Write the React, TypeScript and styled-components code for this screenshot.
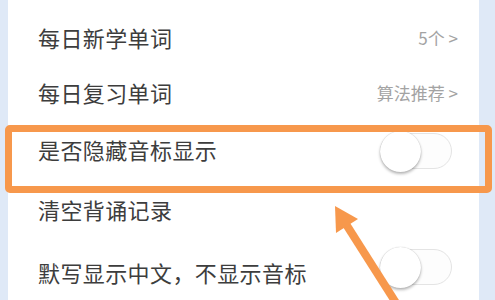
import styled, { createGlobalStyle } from 'styled-components';

const GlobalStyle = createGlobalStyle`
  html, body {
    margin: 0;
    padding: 0;
    width: 495px;
    height: 300px;
    overflow: hidden;
    background: #dfe9f7;
  }
`;

const Page = styled.div`
  position: relative;
  width: 495px;
  height: 300px;
  padding: 0 16px 0 8px;
  box-sizing: border-box;
  background: #dfe9f7;
  font-family: 'Noto Sans CJK SC', 'Noto Sans', sans-serif;
`;

const Card = styled.div`
  display: flex;
  flex-direction: column;
  height: 100%;
  padding: 11px 21px 0 30px;
  background: #ffffff;
`;

const Row = styled.div<{ $h: number }>`
  display: flex;
  align-items: center;
  justify-content: space-between;
  height: ${p => p.$h}px;
  flex-shrink: 0;
`;

const Label = styled.span`
  font-size: 22px;
  color: #3d3d3d;
  letter-spacing: 0.4px;
`;

const Value = styled.span`
  font-size: 17px;
  color: #a3a3a3;
`;

const Track = styled.div<{ $dy: number }>`
  position: relative;
  width: 72px;
  height: 36px;
  margin-right: 6px;
  margin-top: ${p => p.$dy}px;
  box-sizing: border-box;
  border: 1px solid #e4e4e4;
  border-radius: 18px;
  background: #fdfdfd;
`;

const Knob = styled.div`
  position: absolute;
  left: -1px;
  top: -3px;
  width: 41px;
  height: 41px;
  border-radius: 50%;
  background: #ffffff;
  box-shadow: 0 2px 3px rgba(0, 0, 0, 0.28), 0 0 1px rgba(0, 0, 0, 0.25);
`;

const Highlight = styled.div`
  position: absolute;
  left: 5px;
  top: 125px;
  width: 487px;
  height: 68px;
  box-sizing: border-box;
  border: 7px solid #f7984c;
  border-radius: 5px;
  pointer-events: none;
`;

const Arrow = styled.svg`
  position: absolute;
  left: 0;
  top: 0;
  pointer-events: none;
`;

function Toggle({ dy = 0 }: { dy?: number }) {
  return (
    <Track $dy={dy}>
      <Knob />
    </Track>
  );
}

export default function App() {
  return (
    <>
      <GlobalStyle />
      <Page>
        <Card>
          <Row $h={52}>
            <Label>每日新学单词</Label>
            <Value>5个 &gt;</Value>
          </Row>
          <Row $h={58}>
            <Label>每日复习单词</Label>
            <Value>算法推荐 &gt;</Value>
          </Row>
          <Row $h={56}>
            <Label>是否隐藏音标显示</Label>
            <Toggle dy={4} />
          </Row>
          <Row $h={64}>
            <Label>清空背诵记录</Label>
          </Row>
          <Row $h={62}>
            <Label>默写显示中文，不显示音标</Label>
            <Toggle dy={-10} />
          </Row>
        </Card>
        <Highlight />
        <Arrow width="495" height="300" viewBox="0 0 495 300">
          <line x1="344" y1="221" x2="398" y2="306" stroke="#f7984c" strokeWidth="8" />
          <polygon points="335,206 358,219 336,233" fill="#f7984c" />
        </Arrow>
      </Page>
    </>
  );
}
